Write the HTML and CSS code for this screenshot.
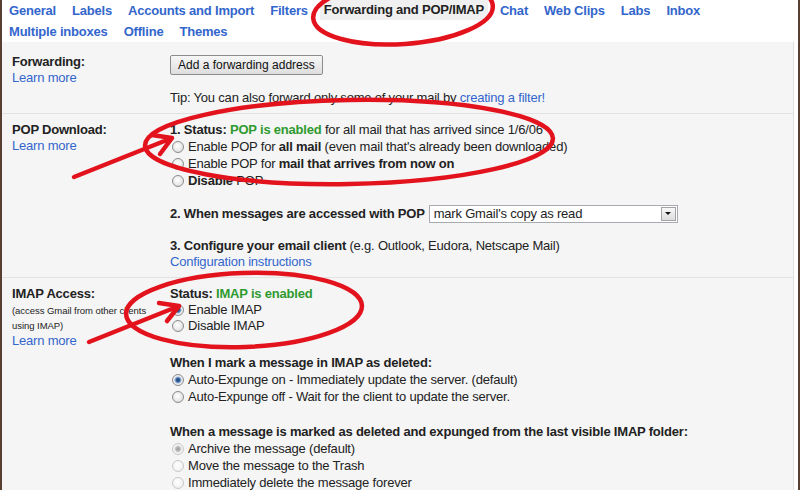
FILE: index.html
```html
<!DOCTYPE html>
<html>
<head>
<meta charset="utf-8">
<title>Settings - Forwarding and POP/IMAP</title>
<link rel="stylesheet" href="styles.css">
</head>
<body>
<div class="window">
  <div class="main">
    <nav class="tabs">
      <div class="tabrow">
        <a class="tab">General</a>
        <a class="tab">Labels</a>
        <a class="tab">Accounts and Import</a>
        <a class="tab">Filters</a>
        <span class="tab sel">Forwarding and POP/IMAP</span>
        <a class="tab">Chat</a>
        <a class="tab">Web Clips</a>
        <a class="tab">Labs</a>
        <a class="tab">Inbox</a>
      </div>
      <div class="tabrow">
        <a class="tab">Multiple inboxes</a>
        <a class="tab">Offline</a>
        <a class="tab">Themes</a>
      </div>
    </nav>

    <div class="panel">
      <section class="sec sec-fwd">
        <div class="label">
          <div class="ttl">Forwarding:</div>
          <a class="link">Learn more</a>
        </div>
        <div class="content">
          <button class="btn">Add a forwarding address</button>
          <div class="line tip">Tip: You can also forward only some of your mail by <a class="link">creating a filter!</a></div>
        </div>
      </section>

      <section class="sec sec-pop">
        <div class="label">
          <div class="ttl">POP Download:</div>
          <a class="link">Learn more</a>
        </div>
        <div class="content">
          <div class="line"><b>1. Status: <span class="ok">POP is enabled</span></b> for all mail that has arrived since 1/6/06</div>
          <label class="rrow"><input type="radio" class="r" name="pop"><span>Enable POP for <b>all mail</b> (even mail that's already been downloaded)</span></label>
          <label class="rrow"><input type="radio" class="r" name="pop"><span>Enable POP for <b>mail that arrives from now on</b></span></label>
          <label class="rrow"><input type="radio" class="r" name="pop"><span><b>Disable</b> POP</span></label>
          <div class="selrow"><b>2. When messages are accessed with POP</b>
            <div class="select"><span class="val">mark Gmail's copy as read</span><span class="arr"></span></div>
          </div>
          <div class="line step3"><b>3. Configure your email client</b> (e.g. Outlook, Eudora, Netscape Mail)</div>
          <div class="line"><a class="link">Configuration instructions</a></div>
        </div>
      </section>

      <section class="sec sec-imap">
        <div class="label">
          <div class="ttl">IMAP Access:</div>
          <div class="small">(access Gmail from other clients<br>using IMAP)</div>
          <a class="link">Learn more</a>
        </div>
        <div class="content">
          <div class="line"><b>Status: <span class="ok">IMAP is enabled</span></b></div>
          <label class="rrow r16"><input type="radio" class="r" name="imap" checked><span>Enable IMAP</span></label>
          <label class="rrow r16"><input type="radio" class="r" name="imap"><span>Disable IMAP</span></label>
          <div class="line q1"><b>When I mark a message in IMAP as deleted:</b></div>
          <label class="rrow"><input type="radio" class="r" name="exp" checked><span>Auto-Expunge on - Immediately update the server. (default)</span></label>
          <label class="rrow"><input type="radio" class="r" name="exp"><span>Auto-Expunge off - Wait for the client to update the server.</span></label>
          <div class="line q2"><b>When a message is marked as deleted and expunged from the last visible IMAP folder:</b></div>
          <label class="rrow"><input type="radio" class="r" name="del" checked disabled><span>Archive the message (default)</span></label>
          <label class="rrow"><input type="radio" class="r" name="del" disabled><span>Move the message to the Trash</span></label>
          <label class="rrow"><input type="radio" class="r" name="del" disabled><span>Immediately delete the message forever</span></label>
        </div>
      </section>
    </div>
  </div>

  <svg class="marks" width="800" height="490" viewBox="0 0 800 490">
    <g fill="none" stroke="#e3131d" stroke-width="4.5" stroke-linecap="round" stroke-linejoin="round">
      <ellipse cx="403" cy="12" rx="90" ry="32" transform="rotate(-4 403 12)"/>
      <ellipse cx="349" cy="142" rx="204" ry="42" transform="rotate(-1 349 142)"/>
      <ellipse cx="244" cy="310" rx="118" ry="37" transform="rotate(-2 244 310)"/>
      <path d="M74 177 L172 138 M152 135 L172 138 L160 154"/>
      <path d="M89 342 L179 306 M159 303 L179 306 L167 321"/>
    </g>
  </svg>
</div>
</body>
</html>
```

FILE: styles.css
```css
html, body {
  margin: 0;
  padding: 0;
}

body {
  background: #ffffff;
  font-family: "Liberation Sans", Arial, sans-serif;
  font-size: 13px;
  letter-spacing: -0.2px;
  color: #222222;
}

.window {
  position: relative;
  width: 800px;
  height: 490px;
  box-sizing: border-box;
  border-left: 2px solid #57402f;
  border-right: 2px solid #57402f;
  background: #ffffff;
  overflow: hidden;
}

.main {
  display: flex;
  flex-direction: column;
  height: 100%;
  margin-right: 4px;
}

/* ---------- tabs ---------- */
.tabs {
  padding-left: 7px;
  flex: none;
}

.tabrow {
  display: flex;
  height: 21px;
  align-items: center;
  font-weight: bold;
}

.tab {
  color: #3366cc;
  margin-right: 16px;
  line-height: 21px;
  text-decoration: none;
  white-space: nowrap;
}

.tab.sel {
  color: #222222;
  background: #f0f0f0;
  padding: 0 4px;
  margin-left: -4px;
  margin-right: 12px;
  line-height: 20px;
  align-self: flex-start;
}

/* ---------- panel ---------- */
.panel {
  flex: 1;
  background: #f5f5f5;
  border-right: 1px solid #e0e0e0;
}

.sec {
  display: flex;
  border-bottom: 1px solid #e2e2e2;
  padding-top: 8px;
  padding-bottom: 7px;
}

.sec-fwd {
  padding-top: 12px;
}

.sec-imap {
  border-bottom: none;
}

.label {
  flex: none;
  width: 158px;
  padding-left: 10px;
  line-height: 16px;
}

.ttl {
  font-weight: bold;
  color: #222222;
}

.link {
  color: #3366cc;
  text-decoration: none;
}

.small {
  font-size: 9.5px;
  letter-spacing: -0.05px;
  line-height: 15px;
  margin-top: 1px;
}

.content {
  flex: 1;
  line-height: 16px;
}

.line {
  line-height: 16px;
  white-space: nowrap;
}

.ok {
  color: #2f9a2f;
}

/* button */
.btn {
  display: block;
  margin-top: 1px;
  height: 20px;
  padding: 0 7px;
  font-family: "Liberation Sans", Arial, sans-serif;
  font-size: 12px;
  letter-spacing: 0;
  color: #111111;
  border: 1px solid #8c8c8c;
  border-radius: 2px;
  background: linear-gradient(#f7f7f7, #dedede);
}

.tip {
  margin-top: 15px;
}

/* radios */
.rrow {
  display: flex;
  align-items: center;
  height: 17px;
  white-space: nowrap;
}

.rrow.r16 {
  height: 16px;
}

.r {
  appearance: none;
  -webkit-appearance: none;
  flex: none;
  box-sizing: border-box;
  width: 12px;
  height: 12px;
  margin: 0 4px 0 2px;
  border-radius: 50%;
  border: 1px solid #8a8c8e;
  background: radial-gradient(circle at 45% 40%, #ffffff 0, #ededed 45%, #d3d3d3 100%);
}

.r:checked {
  background: radial-gradient(circle at 50% 50%, #1c3b66 0, #3d6aa6 2px, #a9c3e0 3.2px, #f2f2f2 4px, #d8d8d8 100%);
}

.r:disabled {
  border-color: #c9c9c9;
  background: radial-gradient(circle at 45% 40%, #ffffff 0, #f3f3f3 60%, #e6e6e6 100%);
}

.r:disabled:checked {
  background: radial-gradient(circle at 50% 50%, #9a9a9a 0, #b4b4b4 2px, #dedede 3.2px, #f6f6f6 4px, #e6e6e6 100%);
}

/* select row */
.selrow {
  display: flex;
  align-items: center;
  height: 19px;
  margin-top: 15px;
  white-space: nowrap;
}

.select {
  display: flex;
  align-items: center;
  box-sizing: border-box;
  width: 249px;
  height: 18px;
  margin-left: 4px;
  border: 1px solid #a7abb1;
  background: #ffffff;
}

.select .val {
  flex: 1;
  padding-left: 4px;
}

.select .arr {
  display: flex;
  align-items: center;
  justify-content: center;
  box-sizing: border-box;
  width: 15px;
  height: 14px;
  margin-right: 1px;
  border: 1px solid #a3a3a3;
  background: linear-gradient(#f8f8f8, #dcdcdc);
}

.select .arr::after {
  content: "";
  border-left: 3px solid transparent;
  border-right: 3px solid transparent;
  border-top: 3px solid #111111;
}

.step3 {
  margin-top: 15px;
}

.q1 {
  margin-top: 21px;
}

.q2 {
  margin-top: 19px;
}

/* red annotations */
.marks {
  position: absolute;
  left: -2px;
  top: 0;
  pointer-events: none;
}
```
